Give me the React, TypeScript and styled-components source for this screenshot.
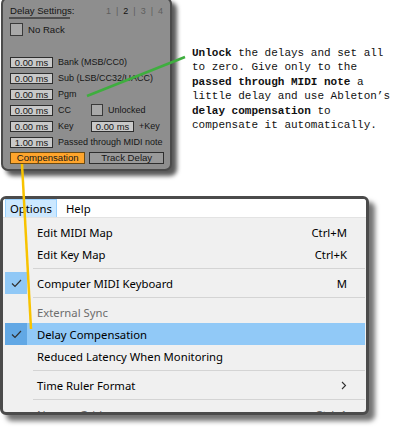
import React from "react";
import styled, { createGlobalStyle } from "styled-components";

const GlobalStyle = createGlobalStyle`
	html, body {
		margin: 0;
		padding: 0;
		background: #ffffff;
	}
`;

const Page = styled.div`
	position: relative;
	width: 399px;
	height: 430px;
	overflow: hidden;
	background: #ffffff;
`;

const TopRow = styled.div`
	display: flex;
	align-items: flex-start;
	height: 196px;
`;

// ---- Ableton device panel ----

const Panel = styled.div`
	box-sizing: border-box;
	margin-left: 1px;
	margin-top: -3px;
	width: 171px;
	height: 174px;
	padding: 6px 6px 0 6px;
	background: #8e8e8e;
	border: 2px solid #4a4a4a;
	border-radius: 7px;
	box-shadow: 5px 5px 4px rgba(0, 0, 0, 0.65);
	font-family: "Liberation Sans", Arial, sans-serif;
	font-size: 9px;
	color: #161616;
`;

const PanelHeader = styled.div`
	display: flex;
	justify-content: space-between;
	align-items: flex-start;
	height: 14px;
`;

const PanelTitle = styled.div`
	width: 61px;
	padding-left: 1px;
	line-height: 12px;
	white-space: nowrap;
	border-bottom: 2px solid #4f4f4f;
	box-sizing: border-box;
	font-size: 9.6px;
`;

const TabStrip = styled.div`
	display: flex;
	gap: 5px;
	line-height: 12px;
	color: #5e5e5e;
	margin-right: 1px;
`;

const TabNum = styled.span<{ $on?: boolean }>`
	color: ${(p) => (p.$on ? "#111" : "#5e5e5e")};
`;

const CheckRow = styled.div`
	display: flex;
	align-items: center;
	gap: 5px;
	margin-top: 4px;
	margin-left: 1px;
	height: 13px;
	font-size: 9.6px;
`;

const Box = styled.div<{ $size: number }>`
	box-sizing: border-box;
	width: ${(p) => p.$size}px;
	height: ${(p) => p.$size}px;
	background: #a9a9a9;
	border: 1px solid #3a3a3a;
	flex-shrink: 0;
`;

const Rows = styled.div`
	margin-top: 18px;
	display: flex;
	flex-direction: column;
`;

const Row = styled.div`
	display: flex;
	align-items: center;
	height: 16px;
	margin-left: 1px;
`;

const Field = styled.div`
	box-sizing: border-box;
	width: 43px;
	height: 11px;
	background: #c9c9c9;
	border: 1px solid #2e2e2e;
	line-height: 9px;
	text-align: center;
	font-size: 9.4px;
	flex-shrink: 0;
`;

const Label = styled.span<{ $w?: number }>`
	margin-left: 5px;
	white-space: nowrap;
	${(p) => (p.$w ? `width: ${p.$w}px;` : "")}
`;

const Inline = styled.div`
	display: flex;
	align-items: center;
	gap: 5px;
`;

const ButtonRow = styled.div`
	display: flex;
	gap: 4px;
	margin-top: 2px;
	margin-left: 1px;
`;

const PanelButton = styled.div<{ $on?: boolean }>`
	box-sizing: border-box;
	width: ${(p) => (p.$on ? 77 : 76)}px;
	height: 12px;
	line-height: 10px;
	text-align: center;
	font-size: 9.6px;
	background: ${(p) => (p.$on ? "#ffa52c" : "#9a9a9a")};
	border: 1px solid ${(p) => (p.$on ? "#6b4a12" : "#2e2e2e")};
	color: #161616;
`;

// ---- annotation ----

const Note = styled.div`
	margin-left: 20px;
	margin-top: 46px;
	font-family: "Liberation Mono", "Courier New", monospace;
	font-size: 11px;
	line-height: 14.4px;
	color: #111;
	white-space: pre;
	b {
		font-weight: 700;
	}
`;

// ---- menu window ----

const Window = styled.div`
	box-sizing: border-box;
	width: 369px;
	height: 219px;
	border: 3px solid #4b4b4b;
	border-radius: 6px;
	box-shadow: 6px 6px 5px rgba(0, 0, 0, 0.55);
	overflow: hidden;
	background: #f0f0f0;
	font-family: "Noto Sans", "Open Sans", sans-serif;
	font-size: 11.3px;
	color: #000;
`;

const MenuBar = styled.div`
	display: flex;
	align-items: stretch;
	height: 18px;
	background: #ffffff;
	border-bottom: 1px solid #e3e3e3;
	padding-left: 2px;
`;

const BarItem = styled.div<{ $open?: boolean }>`
	box-sizing: border-box;
	display: flex;
	align-items: center;
	padding: 0 5px 0 ${(p) => (p.$open ? 4 : 8)}px;
	background: ${(p) => (p.$open ? "#cce8ff" : "transparent")};
	border: 1px solid ${(p) => (p.$open ? "#99d1ff" : "transparent")};
	border-bottom: none;
	width: ${(p) => (p.$open ? "52px" : "auto")};
`;

const MenuBody = styled.div`
	padding: 3px 1px 0 2px;
`;

const Item = styled.div<{ $hot?: boolean; $off?: boolean }>`
	display: flex;
	align-items: center;
	height: 22px;
	background: ${(p) => (p.$hot ? "#91c9f7" : "transparent")};
	color: ${(p) => (p.$off ? "#6d6d6d" : "#000")};
`;

const CheckCell = styled.div<{ $on?: boolean; $hot?: boolean }>`
	width: 22px;
	height: 100%;
	display: flex;
	align-items: center;
	justify-content: center;
	background: ${(p) => (!p.$on ? "transparent" : p.$hot ? "#62a8e5" : "#90c8f6")};
`;

const ItemText = styled.span`
	flex: 1;
	margin-left: 10px;
	white-space: nowrap;
`;

const Shortcut = styled.span`
	margin-right: 18px;
	white-space: nowrap;
`;

const Separator = styled.div`
	height: 7px;
	display: flex;
	align-items: center;
	padding-left: 28px;
	&::after {
		content: "";
		flex: 1;
		height: 1px;
		background: #d4d4d4;
	}
`;

const Overlay = styled.svg`
	position: absolute;
	left: 0;
	top: 0;
	pointer-events: none;
`;

const Check = () => (
	<svg width="11" height="9" viewBox="0 0 11 9">
		<polyline points="1,4.5 4,7.5 10,1" fill="none" stroke="#303030" strokeWidth="1.2" />
	</svg>
);

const Chevron = () => (
	<svg width="6" height="9" viewBox="0 0 6 9">
		<polyline points="1,1 4.5,4.5 1,8" fill="none" stroke="#333" strokeWidth="1.1" />
	</svg>
);

type MenuEntry =
	| { sep: true }
	| { label: string; key?: string; checked?: boolean; hot?: boolean; off?: boolean; sub?: boolean };

const entries: MenuEntry[] = [
	{ label: "Edit MIDI Map", key: "Ctrl+M" },
	{ label: "Edit Key Map", key: "Ctrl+K" },
	{ sep: true },
	{ label: "Computer MIDI Keyboard", key: "M", checked: true },
	{ sep: true },
	{ label: "External Sync", off: true },
	{ label: "Delay Compensation", checked: true, hot: true },
	{ label: "Reduced Latency When Monitoring" },
	{ sep: true },
	{ label: "Time Ruler Format", sub: true },
	{ sep: true },
	{ label: "Narrow Grid", key: "Ctrl+1", off: true },
];

export default function App() {
	return (
		<Page>
			<GlobalStyle />
			<TopRow>
				<Panel>
					<PanelHeader>
						<PanelTitle>Delay Settings:</PanelTitle>
						<TabStrip>
							<TabNum>1</TabNum>|<TabNum $on>2</TabNum>|<TabNum>3</TabNum>|<TabNum>4</TabNum>
						</TabStrip>
					</PanelHeader>
					<CheckRow>
						<Box $size={13} />
						<span>No Rack</span>
					</CheckRow>
					<Rows>
						<Row>
							<Field>0.00 ms</Field>
							<Label>Bank (MSB/CC0)</Label>
						</Row>
						<Row>
							<Field>0.00 ms</Field>
							<Label>Sub (LSB/CC32/UACC)</Label>
						</Row>
						<Row>
							<Field>0.00 ms</Field>
							<Label>Pgm</Label>
						</Row>
						<Row>
							<Field>0.00 ms</Field>
							<Label $w={33}>CC</Label>
							<Inline>
								<Box $size={12} />
								<span>Unlocked</span>
							</Inline>
						</Row>
						<Row>
							<Field>0.00 ms</Field>
							<Label $w={33}>Key</Label>
							<Inline>
								<Field>0.00 ms</Field>
								<span>+Key</span>
							</Inline>
						</Row>
						<Row>
							<Field>1.00 ms</Field>
							<Label>Passed through MIDI note</Label>
						</Row>
					</Rows>
					<ButtonRow>
						<PanelButton $on>Compensation</PanelButton>
						<PanelButton>Track Delay</PanelButton>
					</ButtonRow>
				</Panel>
				<Note>
					<b>Unlock</b> the delays and set all{"\n"}
					to zero. Give only to the{"\n"}
					<b>passed through MIDI note</b> a{"\n"}
					little delay and use Ableton’s{"\n"}
					<b>delay compensation</b> to{"\n"}
					compensate it automatically.
				</Note>
			</TopRow>
			<Window>
				<MenuBar>
					<BarItem $open>Options</BarItem>
					<BarItem>Help</BarItem>
				</MenuBar>
				<MenuBody>
					{entries.map((e, i) =>
						"sep" in e ? (
							<Separator key={i} />
						) : (
							<Item key={i} $hot={e.hot} $off={e.off}>
								<CheckCell $on={e.checked} $hot={e.hot}>
									{e.checked && <Check />}
								</CheckCell>
								<ItemText>{e.label}</ItemText>
								{e.key && <Shortcut>{e.key}</Shortcut>}
								{e.sub && (
									<Shortcut>
										<Chevron />
									</Shortcut>
								)}
							</Item>
						)
					)}
				</MenuBody>
			</Window>
			<Overlay width="399" height="430">
				<line x1="87" y1="96" x2="185" y2="57" stroke="#3fae3f" strokeWidth="2.5" />
				<line x1="22" y1="164" x2="31" y2="329" stroke="#f8c300" strokeWidth="2.5" />
			</Overlay>
		</Page>
	);
}
